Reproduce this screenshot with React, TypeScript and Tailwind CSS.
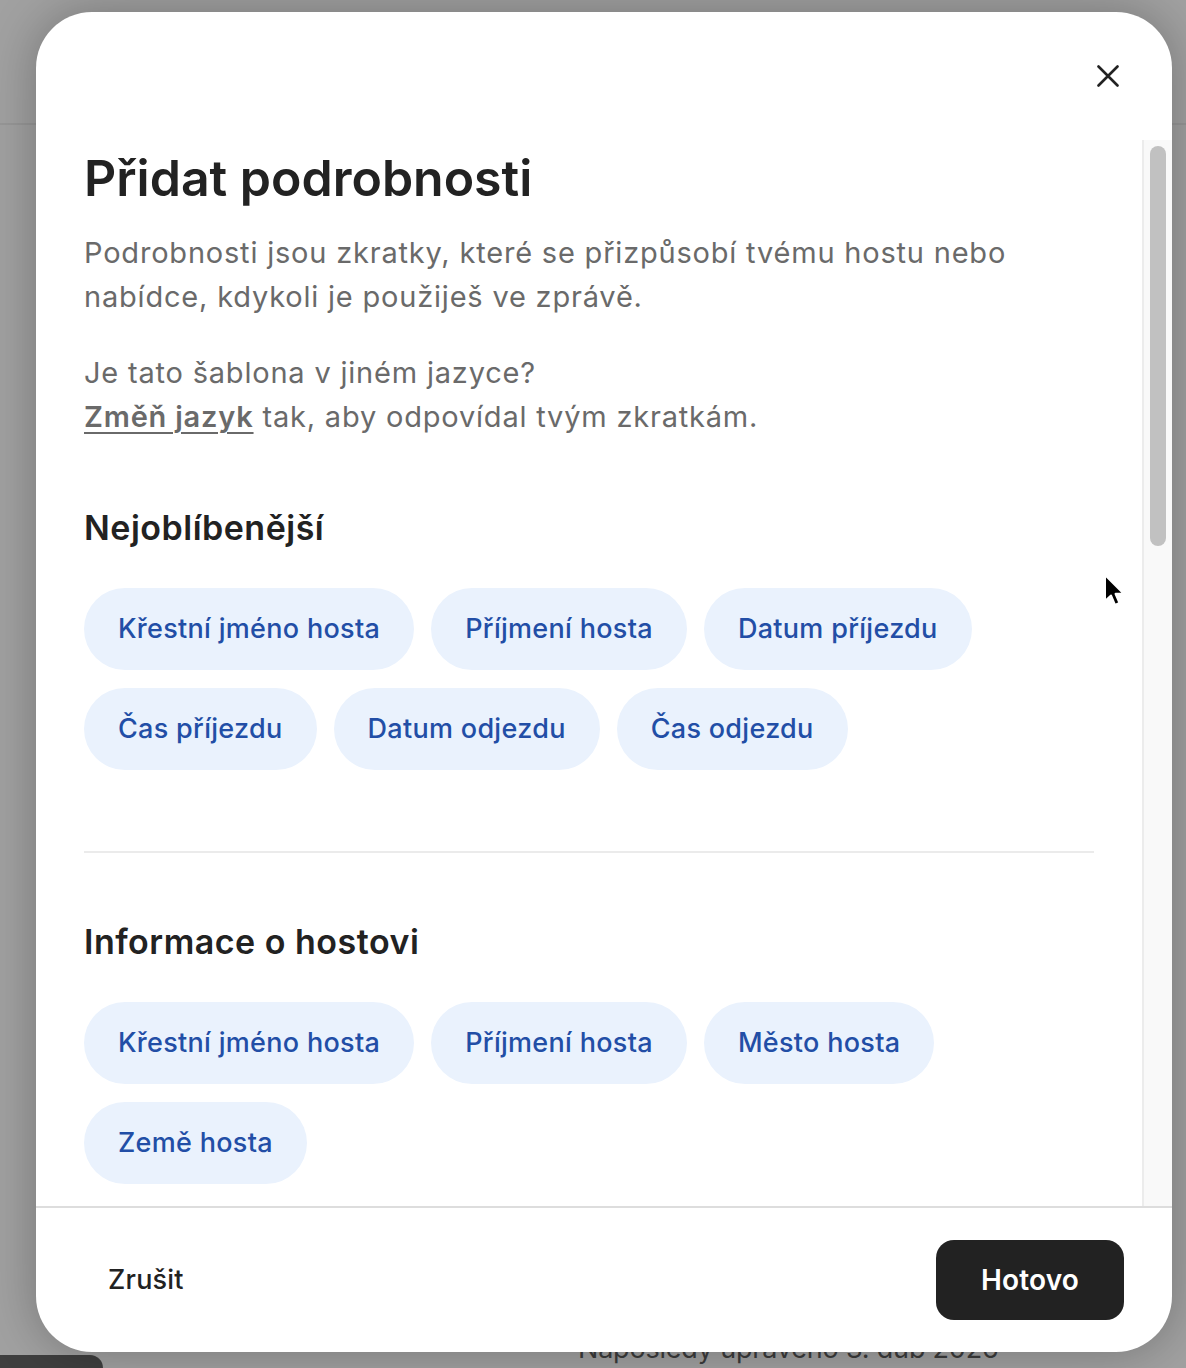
import React from "react";

const chipsTop = ["Křestní jméno hosta", "Příjmení hosta", "Datum příjezdu", "Čas příjezdu", "Datum odjezdu", "Čas odjezdu"];
const chipsGuest = ["Křestní jméno hosta", "Příjmení hosta", "Město hosta", "Země hosta"];

function Chip({ label }: { label: string }) {
  return (
    <button className="h-[82px] px-[34px] rounded-full bg-[#eaf2fd] text-[#224ea6] text-[27px] font-medium tracking-[0.3px] whitespace-nowrap">
      {label}
    </button>
  );
}

export default function App() {
  return (
    <div className="relative w-[1186px] h-[1368px] overflow-hidden bg-[#a1a1a1] font-['Inter','Noto_Sans',sans-serif]">
      {/* page behind the overlay */}
      <div className="flex flex-col h-full">
        <div className="h-[125px] border-b-2 border-[#979797] shrink-0" />
        <div className="flex-1" />
        <div className="h-[30px] shrink-0 flex items-end relative">
          <div className="w-[103px] h-[13px] bg-[#3f3f3f] rounded-tr-[16px]" />
          <div className="ml-[475px] mb-[4px] text-[27px] leading-[30px] text-[#3c3c3c] tracking-[-0.2px]">Naposledy upraveno 3. dub 2026</div>
        </div>
      </div>

      {/* modal */}
      <div className="absolute left-[36px] top-[12px] w-[1136px] h-[1340px] rounded-[56px] bg-white flex flex-col overflow-hidden shadow-[0_0_50px_rgba(0,0,0,0.28)]">
        <div className="h-[128px] shrink-0 flex justify-end items-start pt-[53px] pr-[53px]">
          <svg width="22" height="22" viewBox="0 0 22 22" fill="none" stroke="#222222" strokeWidth="2.6" strokeLinecap="round">
            <path d="M1.5 1.5 L20.5 20.5 M20.5 1.5 L1.5 20.5" />
          </svg>
        </div>

        <div className="flex-1 min-h-0 flex">
          <div className="flex-1 overflow-hidden pl-[48px] pr-[48px] pt-[9px]">
            <h1 className="text-[50px] leading-[58px] font-semibold text-[#222222]">Přidat podrobnosti</h1>
            <p className="mt-[24px] text-[29px] leading-[44px] text-[#6a6a6a] tracking-[0.8px]">
              Podrobnosti jsou zkratky, které se přizpůsobí tvému hostu nebo nabídce, kdykoli je použiješ ve zprávě.
            </p>
            <p className="mt-[32px] text-[29px] leading-[44px] text-[#6a6a6a] tracking-[0.8px]">
              Je tato šablona v jiném jazyce?
              <br />
              <span className="font-semibold underline underline-offset-[5px] decoration-2">Změň jazyk</span> tak, aby odpovídal tvým zkratkám.
            </p>

            <h2 className="mt-[68px] text-[34px] leading-[42px] font-semibold text-[#222222] tracking-[0.5px]">Nejoblíbenější</h2>
            <div className="mt-[39px] flex flex-wrap gap-x-[17px] gap-y-[18px] pr-[100px]">
              {chipsTop.map((c) => (
                <Chip key={c} label={c} />
              ))}
            </div>

            <div className="mt-[81px] h-[2px] bg-[#ebebeb]" />

            <h2 className="mt-[68px] text-[34px] leading-[42px] font-semibold text-[#222222] tracking-[0.5px]">Informace o hostovi</h2>
            <div className="mt-[39px] flex flex-wrap gap-x-[17px] gap-y-[18px] pr-[140px]">
              {chipsGuest.map((c) => (
                <Chip key={c} label={c} />
              ))}
            </div>
            <div className="mt-[81px] h-[2px] bg-[#ebebeb]" />
          </div>
          <div className="w-[30px] shrink-0 bg-[#f9f9f9] border-l-2 border-[#ececec] pt-[6px] pl-[6px] pr-[6px]">
            <div className="h-[400px] rounded-full bg-[#c1c1c1]" />
          </div>
        </div>

        <div className="h-[146px] shrink-0 border-t-2 border-[#dddddd] flex items-center justify-between pl-[72px] pr-[48px]">
          <button className="text-[27px] font-medium text-[#222222] tracking-[0.2px]">Zrušit</button>
          <button className="w-[188px] h-[80px] rounded-[18px] bg-[#222222] text-white text-[28px] font-semibold tracking-[0.2px]">Hotovo</button>
        </div>
      </div>

      {/* mouse cursor */}
      <svg className="absolute left-[1102px] top-[572px]" width="26" height="38" viewBox="0 0 26 38">
        <path d="M3 3 L3 29 L9 23.5 L13 33 L17.5 31 L13.5 21.8 L21.5 21.5 Z" fill="#000" stroke="#fff" strokeWidth="2" strokeLinejoin="round" />
      </svg>
    </div>
  );
}
